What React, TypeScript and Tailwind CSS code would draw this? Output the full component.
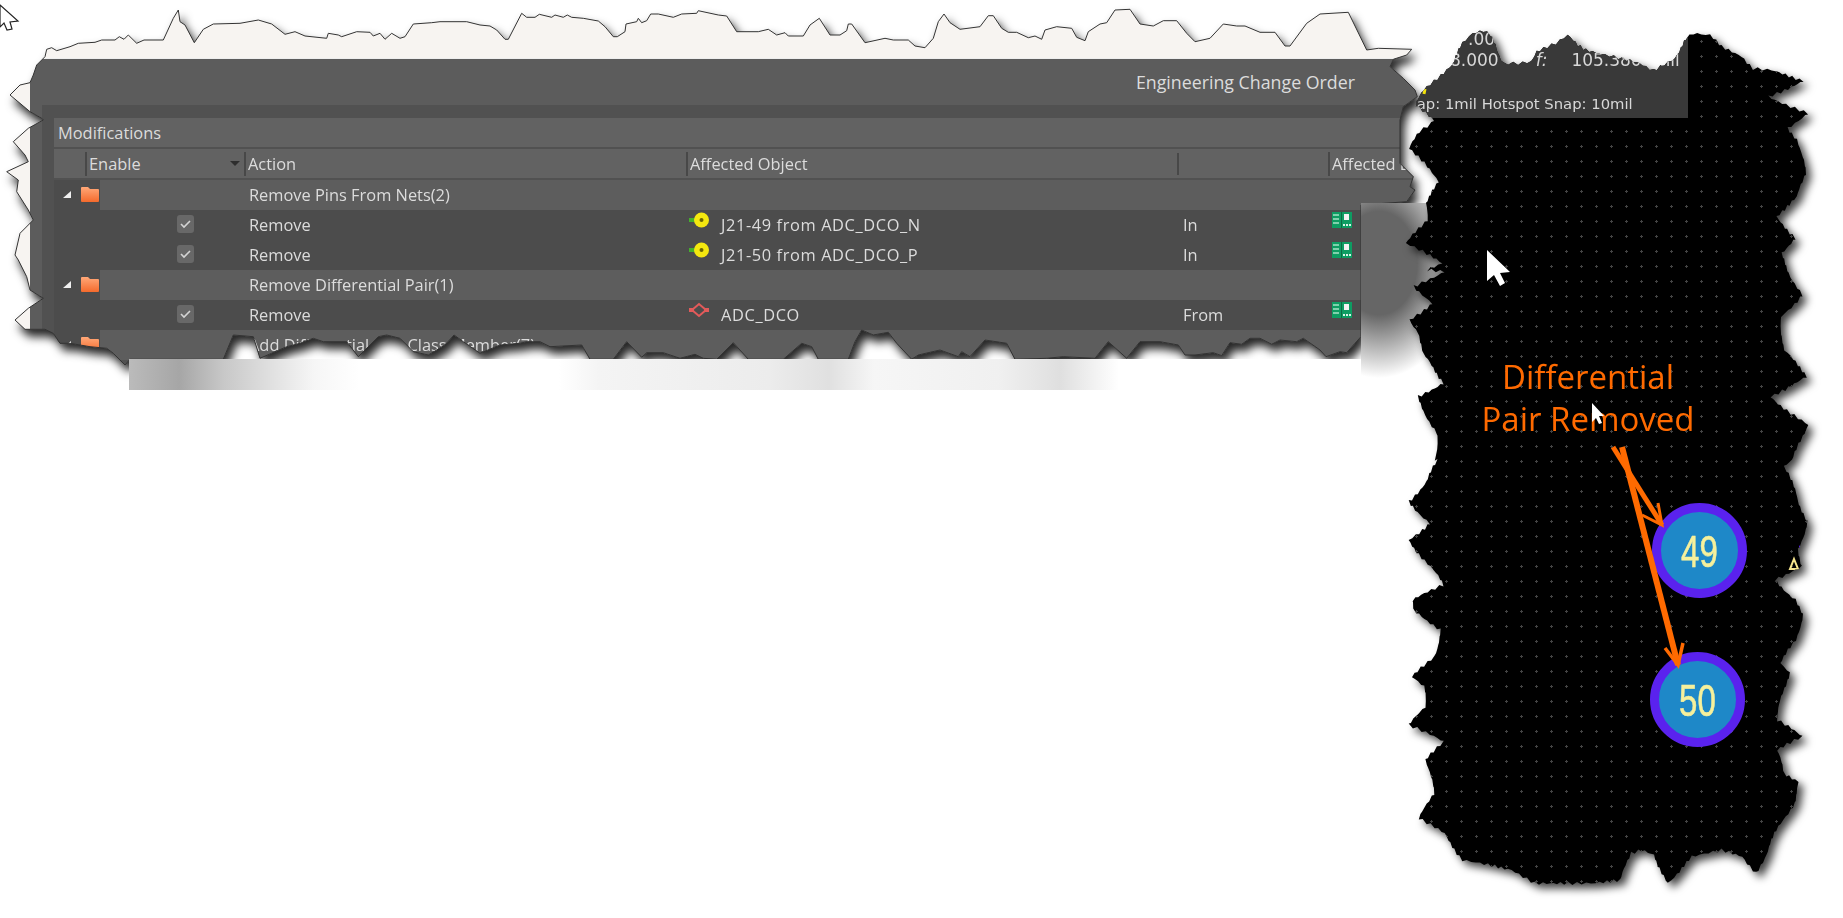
import React from "react";

// tear outlines were traced off 3x crops, so every list is [x, y, x, y...] in crop pixels
const crop = (ox: number, oy: number, list: number[]) => {
  const out: [number, number][] = [];
  for (let i = 0; i < list.length; i += 2) out.push([ox + list[i] / 3, oy + list[i + 1] / 3]);
  return out;
};

const sheetEdge: [number, number][] = [
  ...crop(0, 0, [135,170,140,148,155,143,170,152,210,140,235,130,285,127,305,120,345,120,358,110,372,118,385,105,410,130,432,120,490,120,520,55,535,30,540,65,555,75,583,128,610,88,640,72,720,70,775,60,815,72,855,103,885,95,915,108,980,115,985,100,1015,105,1025,110,1070,95,1110,97,1120,108,1140,100,1155,118,1175,100,1200,115,1215,110,1240,72,1295,68,1320,65,1400,65]),
  ...crop(480, 0, [0,75,30,78,50,90,75,118,85,118,125,40,140,52,165,52,178,43,215,52,225,45,250,52,262,45,275,52,310,55,355,63,375,80,400,110,412,110,435,95,438,72,470,65,475,55,485,68,500,62,512,42,535,42,580,52,605,42,650,40,655,32,715,45,740,48,770,95,835,95,865,88,890,105,915,98,925,108,970,108,990,75,1018,55,1050,105,1080,105,1100,92,1105,72,1115,72,1155,128,1215,115,1240,120,1285,120,1305,138,1335,143,1360,115,1375,65,1392,42,1410,68]),
  ...crop(960, 0, [0,88,60,80,85,47,100,47,125,85,145,97,170,97,205,113,225,108,245,118,255,90,290,80,335,85,350,112,375,122,385,95,420,72,440,68,465,30,510,28,540,72,580,78,610,62,650,62,680,100,705,125,750,115,790,72,830,78,855,78,900,97,945,97,975,138,990,138,1040,70,1080,42,1165,37,1220,150,1255,145,1355,148,1340,165,1300,178,1290,200,1330,235,1365,270,1372,290,1330,320,1320,360,1320,390]),
  ...crop(1200, 160, [600,10,640,50,630,80,645,90,620,125,483,135,483,530,465,550,440,578,420,575,378,590,360,570,310,535,290,545,240,540,215,553,180,535,150,535,125,553,90,548,65,587]),
  ...crop(780, 300, [1300,158,1245,165,1215,165,1195,135,1140,125,1080,125,1040,175,985,125,945,175,850,170,800,175,705,178,680,130,615,120,570,170,545,155,535,170,480,150,415,165,395,178,350,130,325,97,280,105,245,90,225,125,205,178,115,178,95,140,65,130,10,178]),
  ...crop(300, 300, [1345,178,1300,128,1250,178,1210,175,1185,163,1140,175,1090,158,1040,158,1025,172,980,125,940,178,870,178,845,135,750,140,720,125,680,125,660,130,600,135,540,160,490,125,462,105,435,135,385,165,340,155,300,115,260,105,235,110,175,170,140,125,70,125,40,115,0,130]),
  ...crop(0, 120, [860,680,780,715,760,650,700,645,670,718,390,718,375,735,340,700,320,685,270,680,210,670,180,670,160,640,135,628,75,628,45,600,85,565,130,535,90,510,80,470,55,420,45,405,60,340,100,300,85,270,50,215,55,180,20,155,85,125,75,105,40,65,85,25,130,0]),
  ...crop(0, 0, [125,355,90,335,60,310,30,285,60,255,90,248,100,225,110,195]),
];

// the black pcb view, page x is offset by 1400 so the sheet can use these directly
const pcbTrace: [number, number][] = [
  ...crop(0, 0, [100,362,45,315,75,270,110,235,135,210,160,190,190,130,215,100,245,92,270,105,290,135,310,190,350,190,390,185,412,155,470,130,500,105,530,135,560,150,720,190,765,212,820,175,860,115,885,100,930,105,960,140,1030,170,1060,205,1110,210,1215,243,1105,290,1220,340,1165,385,1195,420,1215,520,1195,590,1125,650,1190,715,1140,760,1170,820,1205,885,1145,950,1150,1050,1225,1130,1110,1190,1220,1275,1180,1380]),
  ...crop(0, 460, [1150,20,1190,100,1220,185,1195,270,1210,320,1120,360,1190,420,1205,465,1190,540,1140,610,1165,640,1130,780,1210,830,1130,870,1150,940,1200,965,1180,1030,1110,1150,1070,1240,1030,1190,960,1170,880,1190,800,1270,765,1185,720,1170,690,1180,665,1260,570,1270,400,1270,340,1230,190,1200,130,1120,60,1075,100,1000,80,900,130,845,30,795,75,740,70,680,40,650,100,590,125,510,35,450,35,420,130,375,90,320,25,240,90,190,25,125,80,65,115,0]),
  ...crop(0, 0, [105,1380,110,1300,50,1190,135,1150,65,1060,60,1000,30,960,95,910,45,860,130,815,85,810,130,790,20,730,80,660,75,610,120,545,60,480,30,445,60,395]),
];

// break long segments up so the edge looks chewed, like the torn-edge effect does
const roughen = (pts: [number, number][]) => {
  const out: [number, number][] = [];
  let n = 0;
  pts.forEach((p, i) => {
    const q = pts[(i + 1) % pts.length];
    const steps = Math.max(1, Math.round(Math.hypot(q[0] - p[0], q[1] - p[1]) / 4));
    for (let s = 0; s < steps; s++) {
      n++;
      const jx = Math.sin(n * 12.9898) * 1.6;
      const jy = Math.sin(n * 78.233) * 1.6;
      out.push([p[0] + ((q[0] - p[0]) * s) / steps + jx, p[1] + ((q[1] - p[1]) * s) / steps + jy]);
    }
  });
  return out;
};

const pcbEdge = roughen(pcbTrace);
const toPolygon = (pts: [number, number][]) =>
  `polygon(${pts.map((p) => `${p[0].toFixed(1)}px ${p[1].toFixed(1)}px`).join(",")})`;
const toLine = (pts: [number, number][]) => pts.map((p) => `${p[0].toFixed(1)},${p[1].toFixed(1)}`).join(" ");

const rows = [
  { group: true, action: "Remove Pins From Nets(2)" },
  { action: "Remove", icon: "pin", object: "J21-49 from ADC_DCO_N", dir: "In" },
  { action: "Remove", icon: "pin", object: "J21-50 from ADC_DCO_P", dir: "In" },
  { group: true, action: "Remove Differential Pair(1)" },
  { action: "Remove", icon: "pair", object: "ADC_DCO", dir: "From" },
  { group: true, action: "Add Differential Pair Class Member(7)" },
];

function PinIcon() {
  return (
    <svg width="20" height="16" viewBox="0 0 20 16">
      <rect x="0" y="6" width="7" height="4" fill="#45b02c" />
      <circle cx="12.5" cy="8" r="7.5" fill="#f4e70f" />
      <circle cx="12.5" cy="8" r="2" fill="#6b6400" />
    </svg>
  );
}

function PairIcon() {
  return (
    <svg width="20" height="16" viewBox="0 0 20 16">
      <path d="M3 8 L10 2 L17 8 L10 14 Z" fill="none" stroke="#e25a5a" strokeWidth="2" />
      <rect x="0" y="6" width="5" height="4" fill="#e25a5a" />
      <rect x="15" y="6" width="5" height="4" fill="#e25a5a" />
    </svg>
  );
}

function BoardIcon() {
  return (
    <svg width="20" height="16" viewBox="0 0 20 16">
      <rect width="20" height="16" fill="#0e9c62" />
      <rect x="9" y="0" width="1" height="16" fill="#0a6b44" />
      <rect x="1" y="2" width="6" height="2" fill="#7fd0ac" />
      <rect x="1" y="6" width="6" height="2" fill="#7fd0ac" />
      <rect x="1" y="10" width="6" height="2" fill="#7fd0ac" />
      <rect x="12" y="2" width="5" height="6" fill="#f2f2f2" />
      <rect x="11" y="12" width="2" height="2" fill="#d8f2e6" />
      <rect x="14" y="12" width="2" height="2" fill="#d8f2e6" />
      <rect x="17" y="12" width="2" height="2" fill="#d8f2e6" />
    </svg>
  );
}

function Row({ row }: { row: (typeof rows)[number] }) {
  return (
    <div className={`flex h-[30px] items-center whitespace-nowrap ${row.group ? "bg-[#5d5d5d]" : "bg-[#4c4c4c]"}`}>
      <div className="flex h-full w-[46px] shrink-0 items-center bg-[#4c4c4c]">
        {row.group && (
          <>
            <svg width="8" height="8" viewBox="0 0 8 8" className="ml-[9px]">
              <path d="M8 0 L8 7 L0 7 Z" fill="#f0f0f0" />
            </svg>
            <svg width="18" height="16" viewBox="0 0 18 16" className="ml-[10px] -translate-y-px">
              <defs>
                <linearGradient id="folderFill" x1="0" y1="0" x2="0" y2="1">
                  <stop offset="0" stopColor="#ffa878" />
                  <stop offset="1" stopColor="#f46a2c" />
                </linearGradient>
              </defs>
              <path d="M1 1 H7 L9 3 H17 Q18 3 18 4 V15 Q18 16 17 16 H1 Q0 16 0 15 V2 Q0 1 1 1 Z" fill="url(#folderFill)" />
            </svg>
          </>
        )}
      </div>
      <div className="flex w-[149px] shrink-0 justify-start pl-[77px]">
        {!row.group && (
          <div className="flex h-[18px] w-[17px] -translate-y-px items-center justify-center rounded-[3px] bg-[#686868]">
            <svg width="11" height="9" viewBox="0 0 11 9">
              <path d="M1 4 L4 7 L10 1" fill="none" stroke="#d4d4d4" strokeWidth="1.6" />
            </svg>
          </div>
        )}
      </div>
      <div className="w-[440px] shrink-0 pt-px">{row.action}</div>
      {!row.group && (
        <>
          <div className="flex w-[494px] shrink-0 items-center gap-[12px]">
            <span className="-translate-y-[5px]">{row.icon === "pin" ? <PinIcon /> : <PairIcon />}</span>
            <span className="pt-px tracking-[0.6px]">{row.object}</span>
          </div>
          <div className="w-[149px] shrink-0 pt-px">{row.dir}</div>
          <span className="-translate-y-[5px]">
            <BoardIcon />
          </span>
        </>
      )}
    </div>
  );
}

function ChangeOrderSheet() {
  return (
    <div className="absolute left-0 top-0 h-[370px] w-[1425px] drop-shadow-[4px_7px_5px_rgba(0,0,0,0.85)]">
      <div
        className="flex h-full w-full flex-col bg-[#f7f4f1] pl-[30px] pt-[58px] font-['Open_Sans',sans-serif] text-[16.4px] text-[#dcdcdc]"
        style={{ clipPath: toPolygon(sheetEdge) }}
      >
        <div className="flex flex-1 flex-col border-t border-[#eeeeee] bg-[#5c5c5c]">
          <div className="flex h-[46px] shrink-0 items-center justify-end pr-[70px] text-[17.8px]">Engineering Change Order</div>
          <div className="ml-[12px] flex-1 bg-[#515151] pl-[12px] pt-[13px]">
            <div className="flex h-[29px] items-center bg-[#626262] pl-[4px] pt-[2px]">Modifications</div>
            <div className="mt-[2px] flex h-[29px] items-center whitespace-nowrap bg-[#626262] pt-px">
              <div className="w-[31px] shrink-0" />
              <div className="flex w-[159px] shrink-0 items-center border-l-2 border-[#484848] pl-[2px]">
                Enable
                <svg width="10" height="5" viewBox="0 0 10 5" className="ml-[89px]">
                  <path d="M0 0 H10 L5 5 Z" fill="#2e2e2e" />
                </svg>
              </div>
              <div className="w-[442px] shrink-0 border-l-2 border-[#484848] pl-[2px]">Action</div>
              <div className="w-[491px] shrink-0 border-l-2 border-[#484848] pl-[2px]">Affected Object</div>
              <div className="h-[22px] w-[151px] shrink-0 border-l-2 border-[#484848]" />
              <div className="border-l-2 border-[#484848] pl-[2px]">Affected Document</div>
            </div>
            <div className="mt-[2px]">
              {rows.map((r, i) => (
                <Row key={i} row={r} />
              ))}
            </div>
          </div>
        </div>
      </div>
      <svg className="absolute left-0 top-0" width="1425" height="370">
        <polygon points={toLine(sheetEdge)} fill="none" stroke="#333333" strokeWidth="1" />
      </svg>
    </div>
  );
}

function Pad({ label, className }: { label: string; className: string }) {
  return (
    <div className={`absolute flex h-[95px] w-[95px] items-center justify-center rounded-full border-[9px] border-[#5a22ee] bg-[#1e88c8] ${className}`}>
      <span className="translate-y-px scale-x-75 font-['Liberation_Sans',sans-serif] text-[44px] leading-none text-[#f6f09c] [-webkit-text-stroke:0.6px_#f6f09c]">{label}</span>
    </div>
  );
}

function PcbSheet() {
  return (
    <div className="absolute left-[1400px] top-0 h-[918px] w-[443px] drop-shadow-[5px_5px_4px_rgba(0,0,0,0.75)]">
      <div
        className="relative h-full w-full bg-black bg-[radial-gradient(circle,#444444_1px,transparent_1.3px)] bg-[size:15px_15px] bg-[position:-6px_4px]"
        style={{ clipPath: toPolygon(pcbEdge) }}
      >
        <div className="relative h-[118px] w-[288px] bg-[#393939] font-['DejaVu_Sans',sans-serif] text-[#d8d8d8]">
          <div className="absolute left-[68px] top-[29px] text-[17px] leading-5">.00</div>
          <div className="absolute left-[50px] top-[50px] flex text-[17px] leading-5">
            <span>8.000</span>
            <span className="ml-[37px] italic">f:</span>
            <span className="ml-[24px]">105.380</span>
            <span className="ml-[12px]">mil</span>
          </div>
          <div className="absolute bottom-[3px] left-[-2px] whitespace-nowrap text-[14.8px]">Snap: 1mil Hotspot Snap: 10mil</div>
          <span className="absolute left-[23px] top-[89px] h-[5px] w-[3px] rotate-12 bg-[#f2e20c]" />
        </div>

        <div className="absolute left-[78px] top-[356px] w-[220px] whitespace-nowrap text-center font-['Open_Sans',sans-serif] text-[33px] leading-[42px] text-[#ff6a00]">
          Differential
          <br />
          Pair Removed
        </div>

        <Pad label="49" className="left-[252px] top-[503px]" />
        <Pad label="50" className="left-[250px] top-[652px]" />

        <svg className="absolute left-0 top-0" width="443" height="918">
          <path d="M213 447 L262 525" stroke="#ff6a00" strokeWidth="5" fill="none" />
          <path d="M258 503 L262 525 L242 515" stroke="#ff6a00" strokeWidth="3" fill="none" />
          <path d="M222 447 L278 665" stroke="#ff6a00" strokeWidth="6" fill="none" />
          <path d="M283 643 L278 665 L265 648" stroke="#ff6a00" strokeWidth="3.5" fill="none" />
          <path d="M87 250 L87 281 L94 275 L100 286 L105 283 L100 273 L110 272 Z" fill="#ffffff" />
          <path d="M192 403 L192 422 L196 418 L199 424 L202 423 L199 416 L204 416 Z" fill="#ffffff" />
          <path d="M399 545 L403 551 L399 556 Z" fill="#5a22ee" />
          <path d="M394 559 L398 569 L390 569 Z" fill="none" stroke="#f6e58c" strokeWidth="2" />
        </svg>
      </div>
    </div>
  );
}

export default function App() {
  return (
    <div className="relative h-[918px] w-[1843px] overflow-hidden bg-white blur-[0.4px]">
      <ChangeOrderSheet />
      {/* shadow leftovers from the cropped screenshot, they stop dead on the crop line */}
      <div className="absolute left-[129px] top-[359px] h-[31px] w-[1232px] bg-[linear-gradient(90deg,#bbbbbb_0px,#a6a6a6_50px,#c8c8c8_95px,#f6f6f6_185px,#ffffff_230px,#ffffff_430px,#f4f4f4_470px,#ececec_640px,#e0e0e0_700px,#f6f6f6_745px,#f0f0f0_870px,#dfdfdf_931px,#ffffff_990px,#ffffff_1232px)]" />
      <div className="absolute left-[1361px] top-[203px] h-[187px] w-[90px] bg-[radial-gradient(ellipse_85px_115px_at_18px_60px,#666666_45%,#ffffff_100%)]" />
      <PcbSheet />
      <svg className="absolute left-0 top-[4px]" width="20" height="28" viewBox="0 0 20 28">
        <path d="M0 1 L18 17 L10 18 L12 25 L7 26 L4 19 L0 23 Z" fill="#ffffff" stroke="#222222" strokeWidth="1.2" />
      </svg>
    </div>
  );
}
